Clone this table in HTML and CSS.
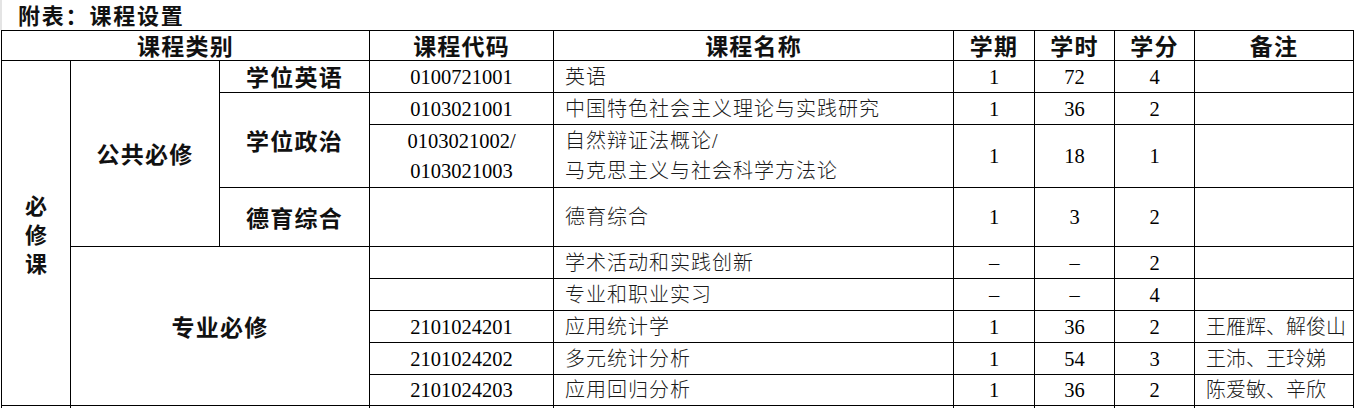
FILE: index.html
```html
<!DOCTYPE html>
<html lang="zh">
<head>
<meta charset="utf-8">
<title>附表：课程设置</title>
<link rel="stylesheet" href="styles.css">
</head>
<body>
<div class="title">附表：课程设置</div>
<table class="course">
  <colgroup>
    <col class="c1"><col class="c2"><col class="c3"><col class="c4"><col class="c5"><col class="c6"><col class="c7"><col class="c8"><col class="c9">
  </colgroup>
  <tr class="r-head">
    <th colspan="3" class="hd">课程类别</th>
    <th class="hd">课程代码</th>
    <th class="hd">课程名称</th>
    <th class="hd">学期</th>
    <th class="hd">学时</th>
    <th class="hd">学分</th>
    <th class="hd">备注</th>
  </tr>
  <tr class="r32">
    <td rowspan="9" class="hd vert">必<br>修<br>课</td>
    <td rowspan="4" class="hd">公共必修</td>
    <td class="hd">学位英语</td>
    <td class="num">0100721001</td>
    <td class="name">英语</td>
    <td class="num">1</td>
    <td class="num">72</td>
    <td class="num">4</td>
    <td class="note"></td>
  </tr>
  <tr class="r32">
    <td rowspan="2" class="hd">学位政治</td>
    <td class="num">0103021001</td>
    <td class="name">中国特色社会主义理论与实践研究</td>
    <td class="num">1</td>
    <td class="num">36</td>
    <td class="num">2</td>
    <td class="note"></td>
  </tr>
  <tr class="r63">
    <td class="num">0103021002/<br>0103021003</td>
    <td class="name">自然辩证法概论/<br>马克思主义与社会科学方法论</td>
    <td class="num">1</td>
    <td class="num">18</td>
    <td class="num">1</td>
    <td class="note"></td>
  </tr>
  <tr class="r59">
    <td class="hd">德育综合</td>
    <td class="num"></td>
    <td class="name">德育综合</td>
    <td class="num">1</td>
    <td class="num">3</td>
    <td class="num">2</td>
    <td class="note"></td>
  </tr>
  <tr class="r32">
    <td rowspan="5" colspan="2" class="hd">专业必修</td>
    <td class="num"></td>
    <td class="name">学术活动和实践创新</td>
    <td class="num">–</td>
    <td class="num">–</td>
    <td class="num">2</td>
    <td class="note"></td>
  </tr>
  <tr class="r32">
    <td class="num"></td>
    <td class="name">专业和职业实习</td>
    <td class="num">–</td>
    <td class="num">–</td>
    <td class="num">4</td>
    <td class="note"></td>
  </tr>
  <tr class="r32">
    <td class="num">2101024201</td>
    <td class="name">应用统计学</td>
    <td class="num">1</td>
    <td class="num">36</td>
    <td class="num">2</td>
    <td class="note">王雁辉、解俊山</td>
  </tr>
  <tr class="r32">
    <td class="num">2101024202</td>
    <td class="name">多元统计分析</td>
    <td class="num">1</td>
    <td class="num">54</td>
    <td class="num">3</td>
    <td class="note">王沛、王玲娣</td>
  </tr>
  <tr class="r31">
    <td class="num">2101024203</td>
    <td class="name">应用回归分析</td>
    <td class="num">1</td>
    <td class="num">36</td>
    <td class="num">2</td>
    <td class="note">陈爱敏、辛欣</td>
  </tr>
  <tr class="r32">
    <td class="hd"></td>
    <td colspan="2" class="hd"></td>
    <td class="num"></td>
    <td class="name"></td>
    <td class="num"></td>
    <td class="num"></td>
    <td class="num"></td>
    <td class="note"></td>
  </tr>
</table>
</body>
</html>
```
FILE: styles.css
```css
html, body {
  margin: 0;
  padding: 0;
  background: #ffffff;
}

body {
  color: #000;
  font-family: "Liberation Serif", "Noto Sans CJK SC", serif;
}

.title {
  height: 30px;
  box-sizing: border-box;
  padding-left: 16px;
  border-left: 2px solid #e4e4e4;
  font-family: "Noto Sans CJK SC", sans-serif;
  font-weight: 700;
  font-size: 22px;
  letter-spacing: 1.8px;
  line-height: 28px;
  color: #111;
}

.course {
  margin-left: 1px;
  border-collapse: collapse;
  table-layout: fixed;
  width: 1352px;
}

.c1 { width: 69px; }
.c2 { width: 149px; }
.c3 { width: 150px; }
.c4 { width: 184px; }
.c5 { width: 400px; }
.c6 { width: 81px; }
.c7 { width: 80px; }
.c8 { width: 80px; }
.c9 { width: 159px; }

.course th,
.course td {
  border: 1px solid #000;
  padding: 0;
  vertical-align: middle;
  white-space: nowrap;
}

.r-head { height: 30px; }
.r32 { height: 32px; }
.r31 { height: 31px; }
.r63 { height: 63px; }
.r59 { height: 59px; }

.course .hd {
  font-family: "Noto Sans CJK SC", sans-serif;
  font-weight: 700;
  font-size: 23px;
  letter-spacing: 1.2px;
  line-height: 27px;
  text-align: center;
  color: #111;
}

.course .vert {
  font-size: 22px;
  line-height: 29px;
  letter-spacing: 0;
}

.course .num {
  font-family: "Liberation Serif", "Noto Sans CJK SC", serif;
  font-size: 20.5px;
  line-height: 30px;
  text-align: center;
}

.course .name,
.course .note {
  font-family: "Liberation Serif", "Noto Sans CJK SC", serif;
  font-size: 20px;
  letter-spacing: 1px;
  line-height: 30px;
  text-align: left;
  padding-left: 11px;
  font-weight: 300;
  color: #1a1a1a;
}

.course .note {
  letter-spacing: 0;
}
```
